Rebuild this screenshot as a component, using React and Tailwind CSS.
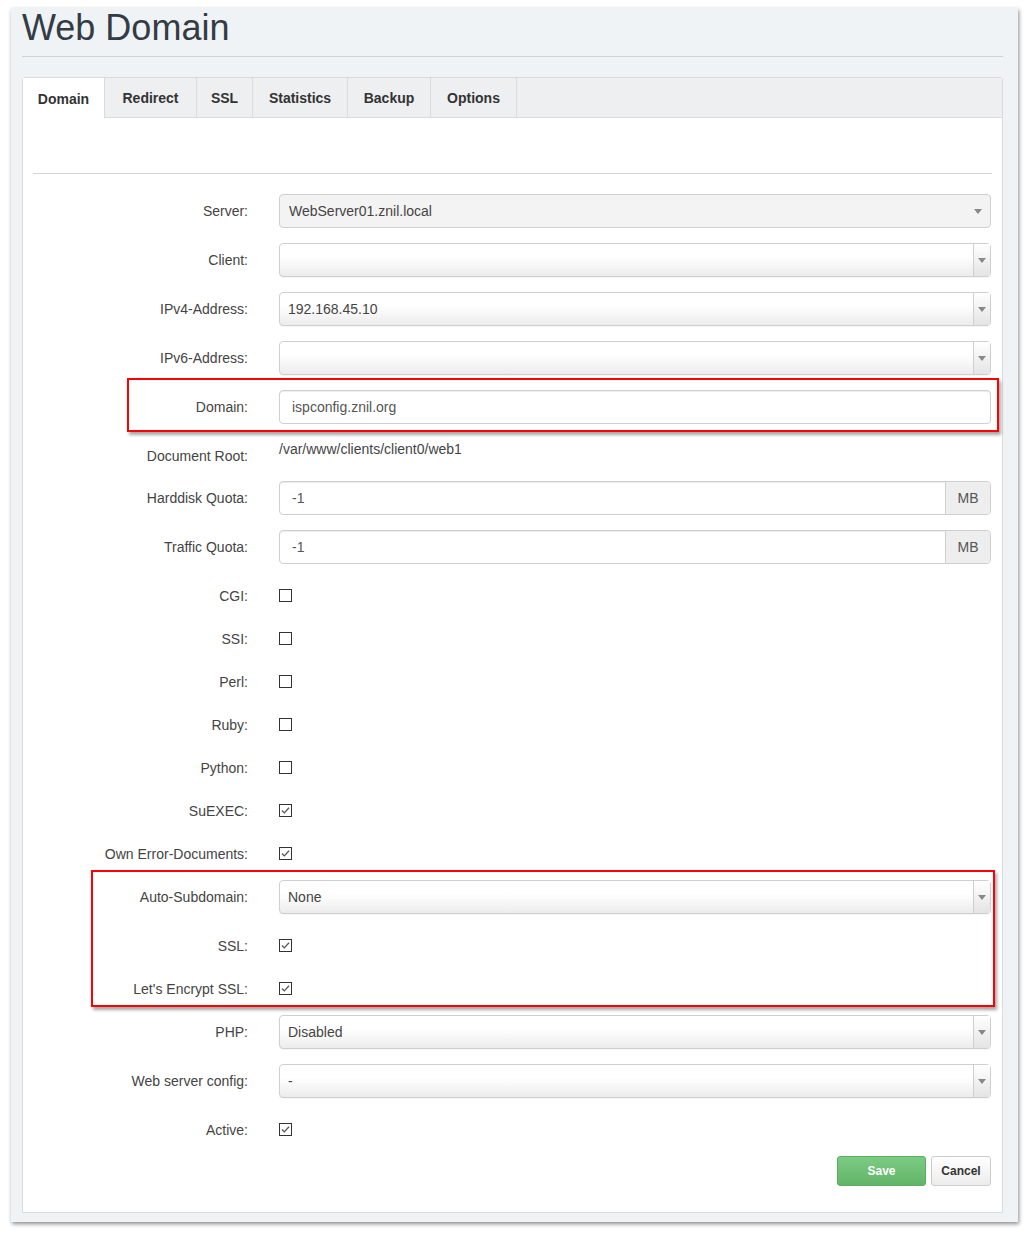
import React from 'react';

const font = "font-['Liberation_Sans',Arial,sans-serif]";

const Arrow = () => (
  <svg width="8" height="5" viewBox="0 0 8 5"><path d="M0 0h8L4 5z" fill="#888" /></svg>
);

const Select = ({ value, plain }) =>
  plain ? (
    <div className="flex h-[34px] items-center justify-between rounded-[4px] border border-[#cfcfcf] bg-[#f3f3f3] pl-[9px] pr-[8px] text-[14px] text-[#444]">
      <span>{value}</span>
      <Arrow />
    </div>
  ) : (
    <div className="flex h-[34px] items-stretch rounded-[4px] border border-[#cfcfcf] bg-gradient-to-b from-white from-40% to-[#ececec] text-[14px] text-[#444] shadow-[0_1px_0_rgba(0,0,0,0.04)]">
      <span className="flex flex-1 items-center pl-[8px]">{value}</span>
      <span className="flex w-[17px] items-center justify-center border-l border-[#cfcfcf] bg-gradient-to-b from-white to-[#e4e4e4]">
        <Arrow />
      </span>
    </div>
  );

const TextInput = ({ value, addon }) => (
  <div className="flex h-[34px] rounded-[4px] border border-[#cfcfcf] bg-white text-[14px] text-[#555] shadow-[inset_0_1px_1px_rgba(0,0,0,0.075)]">
    <span className="flex flex-1 items-center pl-[12px]">{value}</span>
    {addon && (
      <span className="flex w-[45px] items-center justify-center rounded-r-[4px] border-l border-[#cfcfcf] bg-[#eee] text-[#555]">
        {addon}
      </span>
    )}
  </div>
);

const Check = ({ checked }) => (
  <div className="h-[28px] pt-[10px]">
    <svg width="13" height="13" viewBox="0 0 13 13" className="block">
      <rect x="0.5" y="0.5" width="12" height="12" fill="#fff" stroke="#333" />
      {checked && <path d="M3 6.5l2.3 2.4L10 3.8" fill="none" stroke="#555" strokeWidth="1.3" />}
    </svg>
  </div>
);

const Row = ({ label, children, top }) => (
  <div className="mb-[15px] flex">
    <div className={`w-[215px] text-right text-[14px] leading-[20px] text-[#444] ${top ? 'pt-[7px]' : 'self-center'}`}>{label}</div>
    <div className="ml-[31px] flex-1">{children}</div>
  </div>
);

const tabs = [
  ['Domain', 'w-[82px]'],
  ['Redirect', 'w-[92px]'],
  ['SSL', 'w-[56px]'],
  ['Statistics', 'w-[95px]'],
  ['Backup', 'w-[83px]'],
  ['Options', 'w-[86px]'],
];

export default function App() {
  return (
    <div className={`relative h-[1235px] w-[1028px] overflow-hidden bg-white ${font}`}>
      <div className="ml-[11px] mt-[8px] h-[1214px] w-[1007px] bg-[#f0f3f6] pl-[11px] pr-[15px] shadow-[1px_2px_4px_rgba(0,0,0,0.45)]">
        <h1 className="pt-[2px] text-[36px] leading-[36px] text-[#333c44]">Web Domain</h1>
        <div className="mt-[10px] border-b border-[#cfd3d6]" />

        <div className="mt-[20px] h-[1136px] rounded-t-[3px] border border-[#d8dadc] bg-white">
          <div className="flex h-[40px] border-b border-[#d8dadc] bg-[#eeeff1]">
            {tabs.map(([t, w], i) => (
              <div
                key={t}
                className={`flex items-center justify-center border-r border-[#d8dadc] pt-[2px] text-[14px] font-bold text-[#333] ${w} ${i === 0 ? 'mb-[-1px] bg-white' : ''}`}
              >
                {t}
              </div>
            ))}
          </div>

          <div className="px-[10px]">
            <div className="mt-[55px] border-b border-[#d5d5d5]" />

            <div className="relative mt-[20px] pr-[1px]">
              <Row label="Server:"><Select plain value="WebServer01.znil.local" /></Row>
              <Row label="Client:"><Select value="" /></Row>
              <Row label="IPv4-Address:"><Select value="192.168.45.10" /></Row>
              <Row label="IPv6-Address:"><Select value="" /></Row>
              <Row label="Domain:"><TextInput value="ispconfig.znil.org" /></Row>
              <Row label="Document Root:" top>
                <div className="text-[14px] leading-[20px] text-[#444]">/var/www/clients/client0/web1</div>
              </Row>
              <Row label="Harddisk Quota:"><TextInput value="-1" addon="MB" /></Row>
              <Row label="Traffic Quota:"><TextInput value="-1" addon="MB" /></Row>
              <Row label="CGI:" top><Check /></Row>
              <Row label="SSI:" top><Check /></Row>
              <Row label="Perl:" top><Check /></Row>
              <Row label="Ruby:" top><Check /></Row>
              <Row label="Python:" top><Check /></Row>
              <Row label="SuEXEC:" top><Check checked /></Row>
              <Row label="Own Error-Documents:" top><Check checked /></Row>
              <Row label="Auto-Subdomain:"><Select value="None" /></Row>
              <Row label="SSL:" top><Check checked /></Row>
              <Row label="Let's Encrypt SSL:" top><Check checked /></Row>
              <Row label="PHP:"><Select value="Disabled" /></Row>
              <Row label="Web server config:"><Select value="-" /></Row>
              <Row label="Active:" top><Check checked /></Row>

              <div className="flex justify-end gap-[5px]">
                <button className="h-[30px] w-[89px] rounded-[3px] border border-[#5aae5e] bg-gradient-to-b from-[#7ccb84] to-[#62b568] text-[12px] font-bold text-white">
                  Save
                </button>
                <button className="h-[30px] w-[60px] rounded-[3px] border border-[#ccc] bg-gradient-to-b from-white to-[#ececec] text-[12px] font-bold text-[#333]">
                  Cancel
                </button>
              </div>

              <div className="pointer-events-none absolute left-[94px] top-[184px] h-[54px] w-[872px] border-2 border-[#f00] shadow-[2px_3px_3px_rgba(0,0,0,0.35)]" />
              <div className="pointer-events-none absolute left-[58px] top-[676px] h-[137px] w-[904px] border-2 border-[#f00] shadow-[2px_3px_3px_rgba(0,0,0,0.35)]" />
            </div>
          </div>
        </div>
      </div>
    </div>
  );
}
